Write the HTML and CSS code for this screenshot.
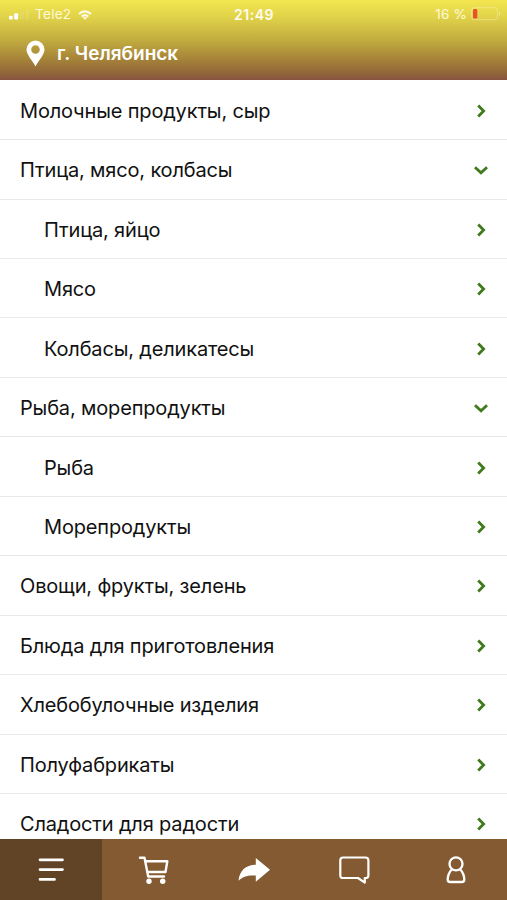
FILE: index.html
```html
<!DOCTYPE html>
<html lang="ru">
<head>
<meta charset="utf-8">
<title>Каталог</title>
<link rel="stylesheet" href="styles.css">
</head>
<body>
<svg class="defs" width="0" height="0">
  <symbol id="right" viewBox="0 0 16 16"><path d="M5.2 2.6 10.6 8l-5.4 5.4" fill="none" stroke="#3f7a1c" stroke-width="2.8"/></symbol>
  <symbol id="down" viewBox="0 0 16 16"><path d="M2 5.200 8 10.800l6-5.600" fill="none" stroke="#3f7a1c" stroke-width="2.800"/></symbol>
</svg>
<div class="app">
  <header class="header">
    <div class="status">
      <div class="carrier">
        <svg class="signal" width="22" height="10" viewBox="0 0 22 10" fill="#fff"><rect x="1" y="5.800" width="3.800" height="3.800" rx="1"/><rect x="6.200" y="3.200" width="4" height="6.400" rx="1"/><g opacity=".1"><rect x="12" y="2" width="3.600" height="7.600" rx="1"/><rect x="17.500" y="0" width="3.600" height="9.600" rx="1"/></g></svg>
        <span class="operator">Tele2</span>
        <svg class="wifi" width="14" height="10" viewBox="0 0 14 10" fill="none" stroke="#fffbea" stroke-width="2.200"><path d="M1 4Q7-1.400 13 4M3.700 6.600Q7 3.600 10.300 6.600"/><path d="M5 7.700Q7 6.100 9 7.700L7 9.800Z" fill="#fffbea" stroke="none"/></svg>
      </div>
      <div class="clock">21:49</div>
      <div class="power">
        <span class="percent">16 %</span>
        <svg class="battery" width="30" height="14" viewBox="0 0 30 14"><rect x=".7" y=".7" width="25.800" height="12" rx="2.500" fill="none" stroke="#fff8c8" stroke-opacity=".4"/><path d="M28 4.500q2 2.200 0 4.400z" fill="#fff8c8" opacity=".6"/><rect x="2" y="2" width="4.300" height="9.600" rx="1.400" fill="#e9502f"/></svg>
      </div>
    </div>
    <div class="city">
      <svg width="19" height="27" viewBox="0 0 19 27"><path fill="#fff" fill-rule="evenodd" d="M9.500.5A9 9 0 0 0 .5 9.500C.5 14.500 6 20 9.500 26.500 13 20 18.500 14.500 18.500 9.500A9 9 0 0 0 9.500.5ZM9.500 5.200a4.300 4.300 0 1 1 0 8.600 4.300 4.300 0 0 1 0-8.600Z"/></svg>
      <span>г. Челябинск</span>
    </div>
  </header>
  <main class="list">
    <div class="row"><span>Молочные продукты, сыр</span><svg class="chev"><use href="#right"/></svg></div>
    <div class="row"><span>Птица, мясо, колбасы</span><svg class="chev"><use href="#down"/></svg></div>
    <div class="row sub"><span>Птица, яйцо</span><svg class="chev"><use href="#right"/></svg></div>
    <div class="row sub"><span>Мясо</span><svg class="chev"><use href="#right"/></svg></div>
    <div class="row sub"><span>Колбасы, деликатесы</span><svg class="chev"><use href="#right"/></svg></div>
    <div class="row"><span>Рыба, морепродукты</span><svg class="chev"><use href="#down"/></svg></div>
    <div class="row sub"><span>Рыба</span><svg class="chev"><use href="#right"/></svg></div>
    <div class="row sub"><span>Морепродукты</span><svg class="chev"><use href="#right"/></svg></div>
    <div class="row"><span>Овощи, фрукты, зелень</span><svg class="chev"><use href="#right"/></svg></div>
    <div class="row"><span>Блюда для приготовления</span><svg class="chev"><use href="#right"/></svg></div>
    <div class="row"><span>Хлебобулочные изделия</span><svg class="chev"><use href="#right"/></svg></div>
    <div class="row"><span>Полуфабрикаты</span><svg class="chev"><use href="#right"/></svg></div>
    <div class="row"><span>Сладости для радости</span><svg class="chev"><use href="#right"/></svg></div>
  </main>
  <nav class="tabs">
    <div class="tab active"><svg viewBox="0 0 34 34"><path d="M6 6.800h22.500M6 16.600h22.500M6 26.400h14.500" stroke-width="2.700"/></svg></div>
    <div class="tab"><svg viewBox="0 0 34 34"><path d="M4 4.800h4.500L12.200 23.500h15.800M9.500 8.300H31.300L29.500 19H11.500" stroke-width="2.400"/><circle cx="13" cy="28.300" r="2.700" fill="#fff" stroke="none"/><circle cx="26.700" cy="28.300" r="2.700" fill="#fff" stroke="none"/></svg></div>
    <div class="tab"><svg viewBox="0 0 34 34"><path d="M18.800 5 33 16.800 18.800 28.700V22.600C11 22 5.800 23.500 1.500 27.800 2.400 18 8.500 11.900 18.800 11.800Z" fill="#fff" stroke="none"/></svg></div>
    <div class="tab"><svg viewBox="0 0 34 34"><path d="M5 4.500h22.400q3 0 3 3v14.900q0 2.600-3 2.600h-.6v4.600L20 25H5q-2.700 0-2.700-2.600V7.500q0-3 2.700-3Z" stroke-width="2.200"/></svg></div>
    <div class="tab"><svg viewBox="0 0 34 34"><circle cx="17" cy="10.900" r="6.500" stroke-width="2.300"/><path d="M13 16.200C10.500 18.700 8.700 23 8.700 26.800q0 2.200 2.500 2.200h11.600q2.500 0 2.500-2.200c0-3.800-1.800-8.100-4.300-10.600" stroke-width="2.300"/></svg></div>
  </nav>
</div>
</body>
</html>
```

FILE: styles.css
```css
* { box-sizing: border-box; }
body {
  margin: 0;
  font-family: Inter, "Liberation Sans", sans-serif;
  color: #111;
  background: #fff;
}
.defs { display: block; }
.app {
  height: 900px;
  display: flex;
  flex-direction: column;
  overflow: hidden;
}
.header {
  flex: 0 0 80px;
  color: #fff;
  background: linear-gradient(#f3e650 0, #e2d44a 20%, #c2ac40 50%, #a48238 75%, #91643a 92%, #875340 100%);
}
.status {
  height: 28px;
  display: grid;
  grid-template-columns: 1fr auto 1fr;
  align-items: center;
  padding: 0 6px 0 8px;
  font-size: 13px;
  color: #fffad8;
}
.carrier, .power { display: flex; align-items: center; }
.signal { margin: 2px 5px 0 0; }
.operator { font-size: 13.5px; letter-spacing: .3px; }
.percent { font-size: 13.5px; letter-spacing: .2px; }
.wifi { margin: 1px 0 0 7px; }
.clock {
  margin-right: 1px;
  font-weight: 600;
  font-size: 14px;
  letter-spacing: .5px;
  color: #fffdf0;
}
.power { justify-content: flex-end; }
.battery { margin-left: 4px; }
.city {
  height: 50px;
  display: flex;
  align-items: center;
  gap: 12px;
  padding-left: 26px;
  font-size: 19px;
  font-weight: 600;
}
.list {
  flex: 1;
  min-height: 0;
  padding-top: .6px;
  overflow: hidden;
}
.row {
  height: 59.46px;
  display: flex;
  align-items: center;
  justify-content: space-between;
  padding: 2px 18px 0 20px;
  border-bottom: 1px solid #e9e9e9;
  font-size: 20px;
  letter-spacing: -.16px;
  white-space: nowrap;
}
.sub { padding-left: 44px; }
.chev { width: 16px; height: 16px; }
.tabs {
  flex: 0 0 61px;
  display: grid;
  grid-template-columns: 102px repeat(4, 1fr);
  background: #835a31;
}
.tab { display: flex; align-items: center; justify-content: center; }
.active { background: #614325; }
.tab svg {
  width: 34px;
  height: 34px;
  fill: none;
  stroke: #fff;
  stroke-linecap: round;
  stroke-linejoin: round;
}
```
